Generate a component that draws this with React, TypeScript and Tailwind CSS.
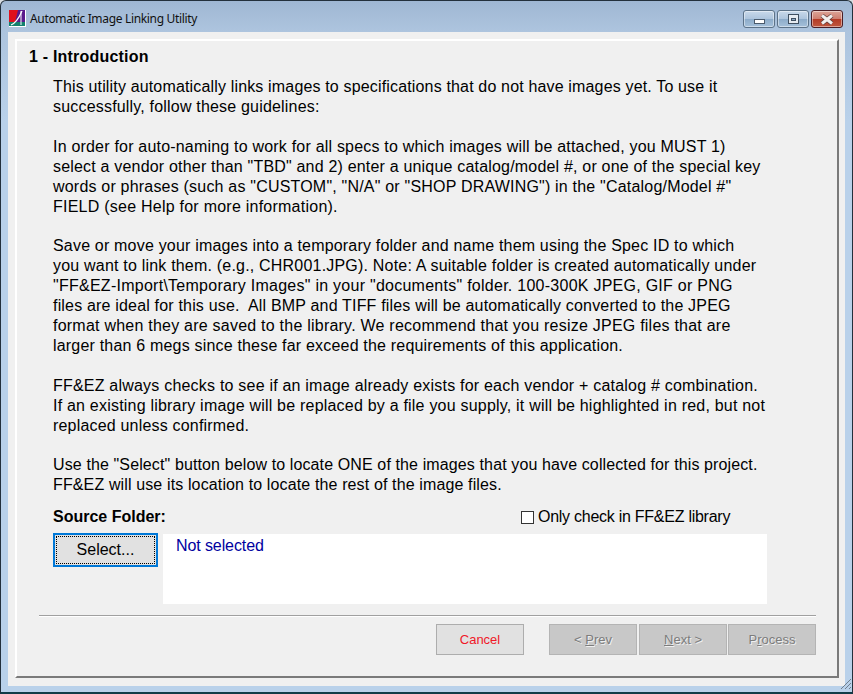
const FONT = "font-['Liberation_Sans',Arial,sans-serif]";

const paragraphs: { mt: string; lines: [string, string][] }[] = [
  {
    mt: "mt-[10px]",
    lines: [
      ["This utility automatically links images to specifications that do not have images yet. To use it", "tracking-[0.16px]"],
      ["successfully, follow these guidelines:", "tracking-[0.19px]"],
    ],
  },
  {
    mt: "mt-[20px]",
    lines: [
      ["In order for auto-naming to work for all specs to which images will be attached, you MUST 1)", "tracking-[0.2px]"],
      ['select a vendor other than "TBD" and 2) enter a unique catalog/model #, or one of the special key', "tracking-[0.19px]"],
      ['words or phrases (such as "CUSTOM", "N/A" or "SHOP DRAWING") in the "Catalog/Model #"', "tracking-[0.2px]"],
      ["FIELD (see Help for more information).", "tracking-[0.24px]"],
    ],
  },
  {
    mt: "mt-[19px]",
    lines: [
      ["Save or move your images into a temporary folder and name them using the Spec ID to which", "tracking-[0.19px]"],
      ["you want to link them. (e.g., CHR001.JPG). Note: A suitable folder is created automatically under", "tracking-[0.2px]"],
      ['"FF&EZ-Import\\Temporary Images" in your "documents" folder. 100-300K JPEG, GIF or PNG', "tracking-[0.26px]"],
      ["files are ideal for this use.  All BMP and TIFF files will be automatically converted to the JPEG", "tracking-[0.18px]"],
      ["format when they are saved to the library. We recommend that you resize JPEG files that are", "tracking-[0.23px]"],
      ["larger than 6 megs since these far exceed the requirements of this application.", "tracking-[0.19px]"],
    ],
  },
  {
    mt: "mt-[20px]",
    lines: [
      ["FF&EZ always checks to see if an image already exists for each vendor + catalog # combination.", "tracking-[0.21px]"],
      ["If an existing library image will be replaced by a file you supply, it will be highlighted in red, but not", "tracking-[0.21px]"],
      ["replaced unless confirmed.", "tracking-[0.19px]"],
    ],
  },
  {
    mt: "mt-[19px]",
    lines: [
      ['Use the "Select" button below to locate ONE of the images that you have collected for this project.', "tracking-[0.12px]"],
      ["FF&EZ will use its location to locate the rest of the image files.", "tracking-[0.13px]"],
    ],
  },
];

function Logo() {
  return (
    <svg width="17" height="17" viewBox="0 0 17 17" className="shrink-0">
      <rect width="17" height="17" fill="#ffffff" />
      <rect x="0" y="0" width="16" height="12" fill="#e0101c" />
      <path d="M9 0H16V12H6Z" fill="#5a1a8c" />
      <rect x="0" y="12" width="16" height="4" fill="#14806e" />
      <path d="M2 15C7 13 10 8 13 1" stroke="#ffffff" strokeWidth="1.2" fill="none" />
      <path d="M12 1V15" stroke="#ffffff" strokeWidth="1" fill="none" />
    </svg>
  );
}

function CaptionButton({ kind }: { kind: "min" | "max" | "close" }) {
  const bg =
    kind === "close"
      ? "bg-[linear-gradient(#dca598_0%,#cf7f70_48%,#b33a25_50%,#c0583f_100%)] border-[#4b1e25]"
      : "bg-[linear-gradient(#c9d9ea_0%,#aec5dd_48%,#8cabc9_50%,#a5c0da_100%)] border-[#5c7288]";
  return (
    <div className={`w-[32px] h-[18px] border rounded-[3px] flex items-center justify-center shadow-[inset_0_0_0_1px_rgba(255,255,255,0.45)] ${bg}`}>
      {kind === "min" && <div className="w-[11px] h-[5px] mt-[4px] bg-white border border-[#4a5a6c]" />}
      {kind === "max" && (
        <div className="w-[11px] h-[10px] border border-[#3f4f60] bg-[#e6ebf1] flex items-center justify-center">
          <div className="w-[5px] h-[3px] bg-[#8fa9c4] border border-[#3f4f60]" />
        </div>
      )}
      {kind === "close" && (
        <svg width="16" height="11" viewBox="0 0 16 11">
          <path d="M3 1.5L13 9.5M13 1.5L3 9.5" stroke="#5a3a38" strokeWidth="4.4" />
          <path d="M3 1.5L13 9.5M13 1.5L3 9.5" stroke="#f2efee" strokeWidth="3" />
        </svg>
      )}
    </div>
  );
}

function NavButton({ pre, ul, post, className }: { pre: string; ul: string; post: string; className: string }) {
  return (
    <div className={`w-[88px] h-[31px] flex items-center justify-center border border-[#b4b4b4] bg-[#c8c8c8] text-[13px] text-[#7c7c7c] [text-shadow:1px_1px_0_#f0f0f0] ${className}`}>
      <span className="whitespace-pre">
        {pre}
        <span className="underline">{ul}</span>
        {post}
      </span>
    </div>
  );
}

export default function App() {
  return (
    <div className={`${FONT} w-[853px] h-[694px] bg-[#d8dde2] overflow-hidden text-black`}>
      <div className="w-full h-full relative rounded-t-[6px] border border-[#23303c] border-b-[2px] border-b-[#103c48] bg-[linear-gradient(180deg,#9fb7d3_0px,#adc4de_30px,#b9d1ea_120px,#b9d1ea_100%)] flex flex-col">
        {/* title bar */}
        <div className="h-[31px] shrink-0 flex pl-[8px] pr-[9px] items-start">
          <div className="flex items-center gap-[4px] mt-[9px]">
            <Logo />
            <span className="text-[12px] leading-[17px] tracking-[-0.33px] text-[#111] font-['Noto_Sans','Liberation_Sans',sans-serif]">Automatic Image Linking Utility</span>
          </div>
          <div className="ml-auto flex gap-[2px] mt-[9px]">
            <CaptionButton kind="min" />
            <CaptionButton kind="max" />
            <CaptionButton kind="close" />
          </div>
        </div>

        {/* client area */}
        <div className="mx-[7px] mb-[6px] h-[654px] bg-[#f0f0f0] pt-[7px] pl-[7px] pr-[6px] pb-[8px]">
          <div className="h-full border-[2px] border-l-white border-t-white border-r-[#7a7a7a] border-b-[#7a7a7a] pl-[12px] pr-[21px] flex flex-col">
            <h1 className="text-[16px] leading-[20px] font-bold mt-[6px] whitespace-nowrap tracking-[0.2px]">1 - Introduction</h1>

            <div className="pl-[24px] text-[16px] leading-[20px] text-black">
              {paragraphs.map((p, i) => (
                <div key={i} className={p.mt}>
                  {p.lines.map(([l, t], j) => (
                    <div key={j} className={`whitespace-pre ${t}`}>{l}</div>
                  ))}
                </div>
              ))}
            </div>

            {/* source folder row */}
            <div className="pl-[24px] mt-[12px] h-[20px] flex items-center">
              <span className="font-bold text-[16px] leading-[20px] w-[112px] whitespace-nowrap">Source Folder:</span>
              <div className="ml-[356px] flex items-center gap-[4px]">
                <div className="w-[13px] h-[13px] border border-[#333] bg-white" />
                <span className="text-[16px] tracking-[-0.26px] leading-[20px] whitespace-nowrap">Only check in FF&amp;EZ library</span>
              </div>
            </div>

            <div className="pl-[24px] mt-[6px] flex items-start gap-[5px]">
              <div className="w-[105px] h-[34px] border-[2px] border-[#0078d7] bg-[#e1e1e1] p-[1px]">
                <div className="w-full h-full border border-dotted border-black flex items-center justify-center text-[16px]">
                  Select...
                </div>
              </div>
              <div className="mt-[1px] w-[604px] h-[70px] bg-white px-[13px] text-[16px] leading-[24px] tracking-[-0.1px] text-[#0000a0]">
                Not selected
              </div>
            </div>

            {/* footer */}
            <div className="ml-[10px] mt-[11px] border-t border-t-[#a0a0a0] border-b border-b-white h-[2px]" />
            <div className="mt-[7px] flex pl-[407px]">
              <div className="w-[88px] h-[31px] flex items-center justify-center border border-[#adadad] bg-[#e1e1e1] text-[13px] text-[#f01828]">
                Cancel
              </div>
              <NavButton pre="< " ul="P" post="rev" className="ml-[25px]" />
              <NavButton pre="" ul="N" post="ext >" className="ml-[2px]" />
              <NavButton pre="P" ul="r" post="ocess" className="ml-[1px]" />
            </div>
          </div>
        </div>

        {/* resize grip */}
        <svg width="12" height="12" viewBox="0 0 12 12" className="absolute right-[0px] bottom-[2px]">
          <path d="M1 11L11 1M5 11L11 5M9 11L11 9" stroke="#6f7f8e" strokeWidth="1" />
        </svg>
      </div>
    </div>
  );
}
